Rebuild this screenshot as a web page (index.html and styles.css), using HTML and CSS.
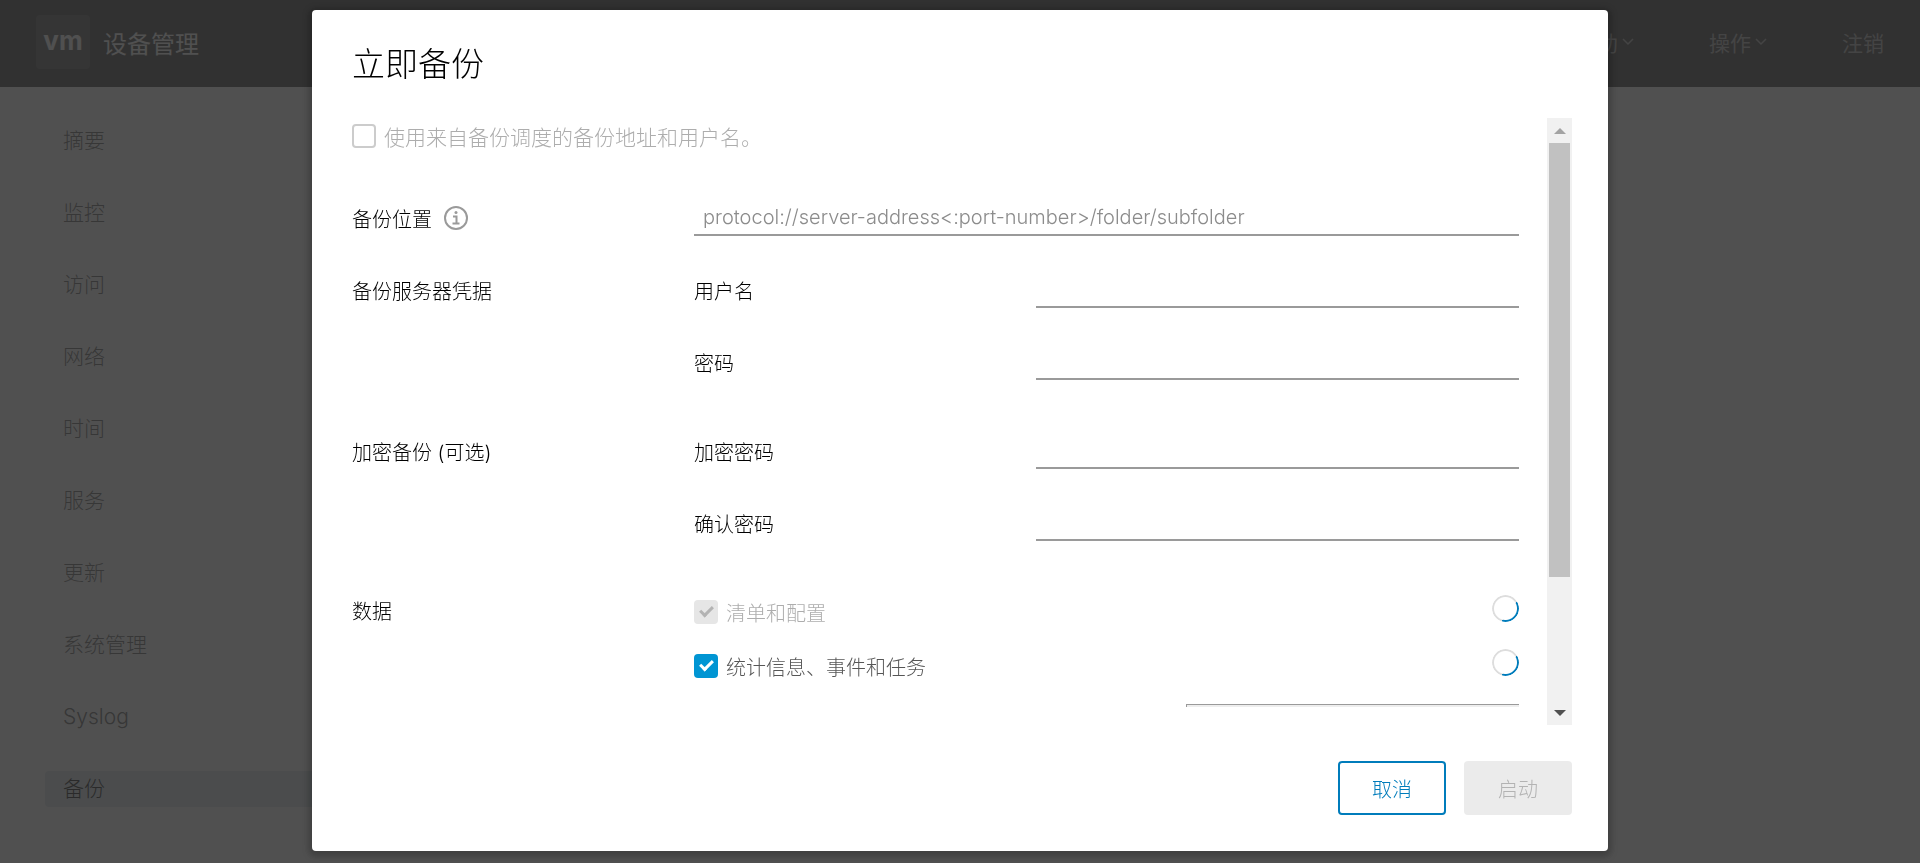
FILE: index.html
```
<!DOCTYPE html>
<html lang="zh-CN">
<head>
    <meta charset="UTF-8">
    <meta name="viewport" content="width=device-width, initial-scale=1.0">
    <title>设备管理 - 备份</title>
    <link rel="stylesheet" href="styles.css">
</head>
<body>
    <header class="header">
        <div class="branding">
            <span class="logo">vm</span>
            <span class="title">设备管理</span>
        </div>
        <div class="header-actions">
            <button class="header-btn" type="button">帮助
                <svg class="caret" viewBox="0 0 12 8"><path d="M1 1l5 5 5-5"/></svg>
            </button>
            <button class="header-btn" type="button">操作
                <svg class="caret" viewBox="0 0 12 8"><path d="M1 1l5 5 5-5"/></svg>
            </button>
            <button class="header-btn" type="button">注销</button>
        </div>
    </header>

    <nav class="sidenav">
        <a href="#summary" class="nav-link">摘要</a>
        <a href="#monitor" class="nav-link">监控</a>
        <a href="#access" class="nav-link">访问</a>
        <a href="#network" class="nav-link">网络</a>
        <a href="#time" class="nav-link">时间</a>
        <a href="#services" class="nav-link">服务</a>
        <a href="#update" class="nav-link">更新</a>
        <a href="#admin" class="nav-link">系统管理</a>
        <a href="#syslog" class="nav-link">Syslog</a>
        <a href="#backup" class="nav-link active">备份</a>
    </nav>

    <!-- 立即备份对话框 -->
    <div class="backdrop">
        <div class="modal" role="dialog" aria-modal="true" aria-labelledby="modalTitle">
            <h3 class="modal-title" id="modalTitle">立即备份</h3>

            <div class="modal-body">
                <form class="form" id="backupForm">
                    <div class="check-row schedule">
                        <input type="checkbox" id="useSchedule" class="checkbox" disabled>
                        <label for="useSchedule" class="disabled">使用来自备份调度的备份地址和用户名。</label>
                    </div>

                    <div class="group">
                        <div class="row row-wide">
                            <div class="label-box">
                                <label for="location">备份位置</label>
                                <svg class="info" viewBox="0 0 24 24">
                                    <circle cx="12" cy="12" r="11"/>
                                    <path d="M9 10.500h3.500v7M8.500 17.500h7"/>
                                    <circle class="dot" cx="12" cy="6.500" r="1.500"/>
                                </svg>
                            </div>
                            <input type="text" id="location" class="field" placeholder="protocol://server-address&lt;:port-number&gt;/folder/subfolder">
                        </div>
                        <div class="row">
                            <span>备份服务器凭据</span>
                            <label for="user">用户名</label>
                            <input type="text" id="user" class="field">
                        </div>
                        <div class="row">
                            <span></span>
                            <label for="password">密码</label>
                            <input type="password" id="password" class="field">
                        </div>
                    </div>

                    <div class="group">
                        <div class="row">
                            <span>加密备份 (可选)</span>
                            <label for="encPassword">加密密码</label>
                            <input type="password" id="encPassword" class="field">
                        </div>
                        <div class="row">
                            <span></span>
                            <label for="confirmPassword">确认密码</label>
                            <input type="password" id="confirmPassword" class="field">
                        </div>
                    </div>

                    <div class="row row-wide row-data">
                        <span class="data-label">数据</span>
                        <div class="data-list">
                            <div class="check-row">
                                <input type="checkbox" id="inventory" class="checkbox" checked disabled>
                                <label for="inventory" class="disabled">清单和配置</label>
                                <span class="spinner"></span>
                            </div>
                            <div class="check-row">
                                <input type="checkbox" id="stats" class="checkbox" checked>
                                <label for="stats">统计信息、事件和任务</label>
                                <span class="spinner"></span>
                            </div>
                            <hr class="total-line">
                        </div>
                    </div>
                </form>

                <div class="scrollbar" aria-hidden="true">
                    <span class="arrow arrow-up"></span>
                    <div class="track"><div class="thumb"></div></div>
                    <span class="arrow arrow-down"></span>
                </div>
            </div>

            <div class="modal-footer">
                <button type="button" class="btn btn-outline">取消</button>
                <button type="submit" class="btn" form="backupForm" disabled>启动</button>
            </div>
        </div>
    </div>
</body>
</html>
```
FILE: styles.css
```
*,
*::before {
    box-sizing: border-box;
}

body {
    margin: 0;
    height: 100vh;
    overflow: hidden;
    background-color: #ffffff;
    color: #565656;
    font-family: Inter, "Noto Sans CJK SC", sans-serif;
    font-size: 20px;
    font-weight: 300;
}

button,
input {
    font: inherit;
}

/* 顶栏 */
.header {
    display: flex;
    justify-content: space-between;
    align-items: center;
    height: 87px;
    padding: 0 36px 3px;
    background-color: #313131;
    color: #fafafa;
}

.branding {
    display: flex;
    align-items: center;
    gap: 13px;
}

.logo {
    width: 54px;
    height: 54px;
    padding-bottom: 4px;
    display: flex;
    align-items: center;
    justify-content: center;
    border-radius: 4px;
    background-color: #4d4d4d;
    font-size: 26px;
    font-weight: 700;
}

.title {
    font-size: 24px;
    font-weight: 400;
}

.header-actions {
    display: flex;
    gap: 75px;
}

.header-btn {
    display: flex;
    align-items: center;
    gap: 4px;
    padding: 0;
    border: none;
    background: none;
    color: #b0b0b0;
    font-size: 21px;
    font-weight: 400;
    cursor: pointer;
}

.caret {
    width: 12px;
    height: 8px;
    fill: none;
    stroke: currentColor;
    stroke-width: 1.5;
}

/* 左侧导航 */
.sidenav {
    display: flex;
    flex-direction: column;
    gap: 36px;
    width: 390px;
    padding: 36px 0 36px 45px;
}

.nav-link {
    height: 36px;
    padding-left: 18px;
    border-radius: 4px 0 0 4px;
    color: #565656;
    font-size: 21px;
    line-height: 36px;
    text-decoration: none;
}

.nav-link.active {
    background-color: #d9e4ea;
    color: #000000;
}

/* 对话框 */
.backdrop {
    position: fixed;
    inset: 0;
    display: flex;
    justify-content: center;
    padding: 10px 0 12px;
    background-color: rgba(49, 49, 49, 0.85);
}

.modal {
    display: flex;
    flex-direction: column;
    width: 67.5%;
    padding: 36px 36px 36px 40px;
    border-radius: 4px;
    background-color: #ffffff;
    box-shadow: 0 2px 6px 4px rgba(0, 0, 0, 0.2);
    color: #000000;
}

.modal-title {
    margin: 0 0 36px;
    font-size: 33px;
    font-weight: 300;
    line-height: 36px;
}

.modal-body {
    display: flex;
    flex: 1;
    min-height: 0;
    gap: 28px;
}

.form {
    flex: 1;
    overflow: hidden;
}

.check-row {
    display: flex;
    align-items: center;
    gap: 8px;
    height: 36px;
    color: #565656;
}

.check-row .disabled {
    color: #adadad;
}

.schedule {
    margin-bottom: 46px;
    font-size: 21px;
}

.checkbox {
    appearance: none;
    flex: none;
    width: 24px;
    height: 24px;
    margin: 0;
    border: 2px solid #cccccc;
    border-radius: 4px;
    background-color: #ffffff;
}

.checkbox:checked {
    display: flex;
    align-items: center;
    justify-content: center;
    border: none;
    background-color: #0095d3;
}

.checkbox:checked::before {
    content: "";
    width: 13px;
    height: 8px;
    margin-bottom: 4px;
    border-left: 3px solid #ffffff;
    border-bottom: 3px solid #ffffff;
    transform: rotate(-45deg);
}

.checkbox:checked:disabled {
    background-color: #e6e6e6;
}

.checkbox:checked:disabled::before {
    border-color: #b3b3b3;
}

.group {
    display: flex;
    flex-direction: column;
    gap: 36px;
    margin-bottom: 53px;
}

.row {
    display: grid;
    grid-template-columns: 34fr 34fr 48fr;
    align-items: center;
    min-height: 36px;
}

.row-wide {
    grid-template-columns: 34fr 82fr;
}

.row-data {
    align-items: start;
}

.label-box {
    display: flex;
    align-items: center;
    gap: 12px;
}

.info {
    width: 24px;
    height: 24px;
    fill: none;
    stroke: #9a9a9a;
    stroke-width: 2;
}

.info .dot {
    fill: #9a9a9a;
    stroke: none;
}

.field {
    width: 100%;
    min-width: 0;
    height: 36px;
    padding: 0 9px;
    border: none;
    border-bottom: 2px solid #9a9a9a;
    background: none;
    color: #000000;
    outline: none;
}

.field::placeholder {
    color: #8c8c8c;
    opacity: 1;
}

.data-label {
    line-height: 36px;
}

.data-list {
    display: flex;
    flex-direction: column;
    gap: 18px;
}

.spinner {
    width: 27px;
    height: 27px;
    margin: 0 0 8px auto;
    border-radius: 50%;
    background: conic-gradient(#dddddd 60deg, #007cbb 60deg 195deg, #dddddd 195deg);
    mask: radial-gradient(circle, transparent 11px, #000000 12px);
}

.total-line {
    width: 333px;
    height: 3px;
    margin: 2px 0 0 auto;
    border: none;
    border-top: 1px solid #9a9a9a;
    border-left: 1px solid #9a9a9a;
    background-color: #eeeeee;
}

/* 滚动条 */
.scrollbar {
    display: flex;
    flex-direction: column;
    width: 25px;
    background-color: #f1f1f1;
}

.arrow {
    display: flex;
    align-items: center;
    justify-content: center;
    height: 25px;
}

.arrow::before {
    content: "";
    border: 6px solid transparent;
}

.arrow-up::before {
    border-top: none;
    border-bottom-color: #a3a3a3;
}

.arrow-down::before {
    border-bottom: none;
    border-top-color: #505050;
}

.track {
    flex: 1;
    padding: 0 2px;
}

.thumb {
    height: 78%;
    background-color: #c1c1c1;
}

/* 底部按钮 */
.modal-footer {
    display: flex;
    justify-content: flex-end;
    gap: 18px;
    margin-top: 36px;
}

.btn {
    width: 108px;
    height: 54px;
    padding: 0;
    border: 2px solid transparent;
    border-radius: 4px;
    cursor: pointer;
}

.btn-outline {
    border-color: #007cbb;
    background-color: #ffffff;
    color: #007cbb;
}

.btn:disabled {
    background-color: #ebebeb;
    color: #b3b3b3;
    cursor: default;
}
```
